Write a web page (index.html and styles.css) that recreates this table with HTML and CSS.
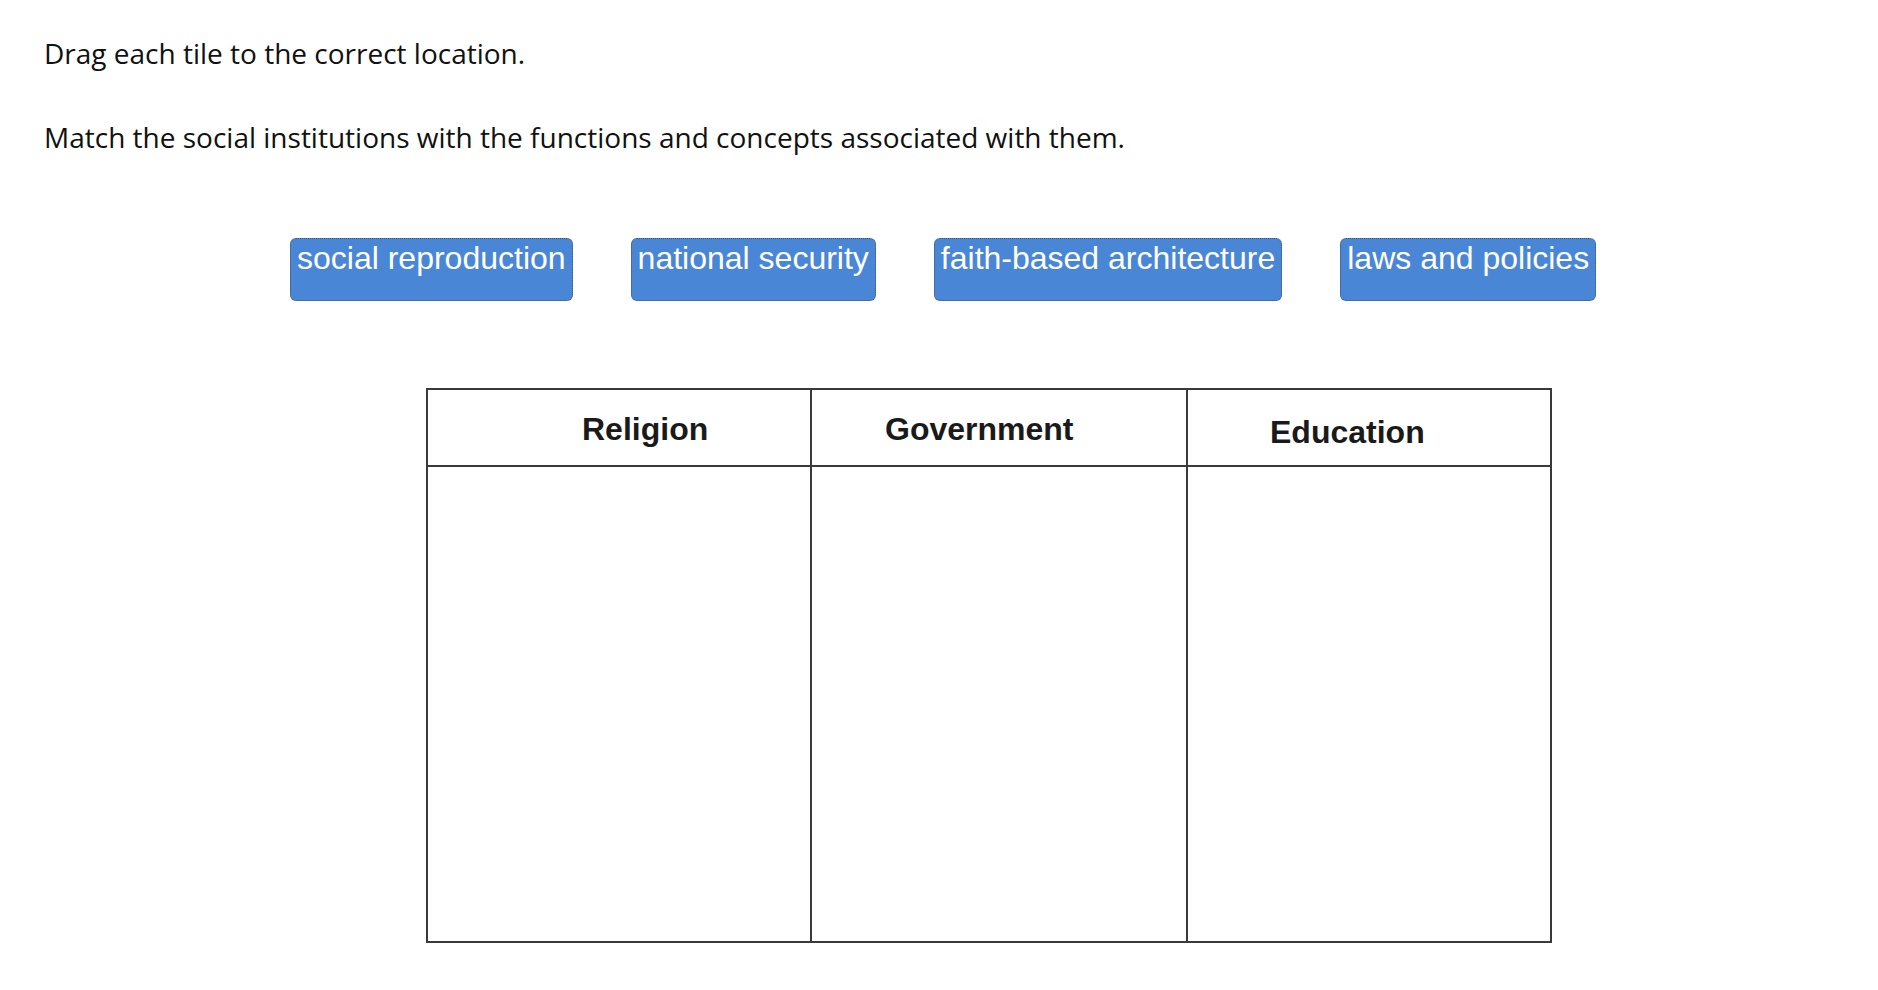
FILE: index.html
```html
<!DOCTYPE html>
<html lang="en">
<head>
<meta charset="utf-8">
<title>Drag each tile</title>
<link rel="stylesheet" href="styles.css">
</head>
<body>
<div class="page">
  <p class="prompt first">Drag each tile to the correct location.</p>
  <p class="prompt second">Match the social institutions with the functions and concepts associated with them.</p>

  <div class="tiles">
    <div class="tile">social reproduction</div>
    <div class="tile">national security</div>
    <div class="tile">faith-based architecture</div>
    <div class="tile">laws and policies</div>
  </div>

  <div class="board">
    <div class="head head-religion">Religion</div>
    <div class="head head-government">Government</div>
    <div class="head head-education">Education</div>
    <div class="drop"></div>
    <div class="drop"></div>
    <div class="drop last"></div>
  </div>
</div>
</body>
</html>
```

FILE: styles.css
```css
html, body {
  margin: 0;
  padding: 0;
  background: #ffffff;
}

.page {
  padding: 35px 0 0 44px;
  font-family: "Open Sans", "Liberation Sans", sans-serif;
  color: #111111;
}

.prompt {
  margin: 0;
  font-size: 28px;
  line-height: 36px;
}

.prompt.second {
  margin-top: 48px;
}

.tiles {
  display: flex;
  gap: 58px;
  margin-top: 83px;
  padding-left: 246px;
}

.tile {
  height: 63px;
  box-sizing: border-box;
  padding: 1px 6px 0 6px;
  background: #4a86d6;
  border: 1px dotted #44536a;
  border-radius: 6px;
  color: #ffffff;
  font-family: "Liberation Sans", Arial, sans-serif;
  font-size: 32px;
  line-height: 36px;
  white-space: nowrap;
}

.board {
  display: grid;
  grid-template-columns: 384px 376px 364px;
  grid-template-rows: 77px 476px;
  width: 1126px;
  margin-top: 87px;
  margin-left: 382px;
  border-top: 2px solid #3a3a3a;
  border-left: 2px solid #3a3a3a;
  box-sizing: border-box;
}

.head, .drop {
  border-right: 2px solid #3a3a3a;
  border-bottom: 2px solid #3a3a3a;
  box-sizing: border-box;
}

.head {
  display: flex;
  align-items: center;
  font-family: "Liberation Sans", Arial, sans-serif;
  font-weight: bold;
  font-size: 32px;
  color: #1a1a1a;
}

.head-religion {
  padding: 4px 0 0 154px;
}

.head-government {
  padding: 4px 0 0 73px;
}

.head-education {
  padding: 10px 0 0 82px;
}
```
